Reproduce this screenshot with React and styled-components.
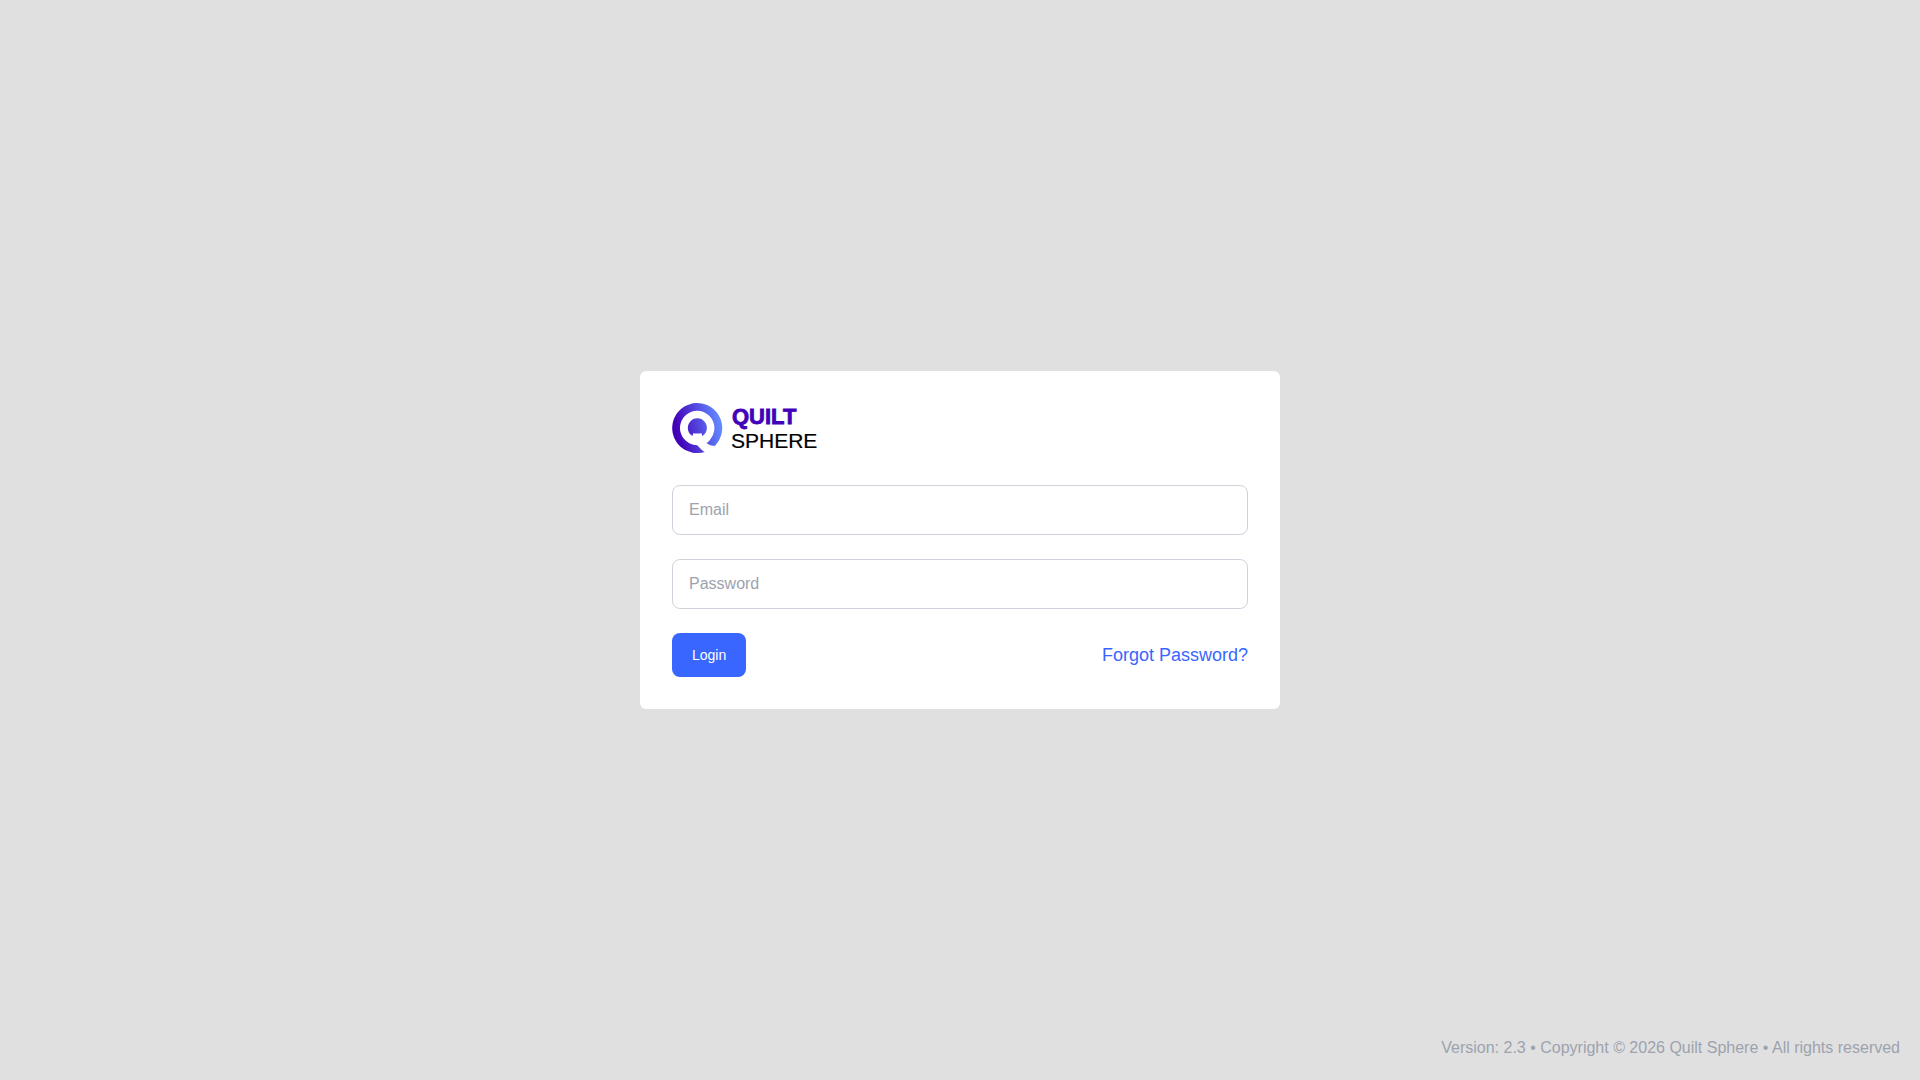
import styled, { createGlobalStyle } from "styled-components";

const GlobalStyle = createGlobalStyle`
  *,
  *::before,
  *::after {
    box-sizing: border-box;
  }

  body {
    margin: 0;
    background: #e0e0e0;
    font-family: "Liberation Sans", Arial, sans-serif;
    font-size: 16px;
    line-height: 24px;
  }
`;

const Page = styled.div`
  position: relative;
  min-height: 100vh;
  display: flex;
  align-items: center;
  justify-content: center;
`;

const Card = styled.main`
  width: 100%;
  max-width: 640px;
  padding: 32px;
  border-radius: 6px;
  background: #fff;
`;

const LogoImage = styled.svg`
  display: block;
  width: 146px;
  height: 50px;
  margin-bottom: 32px;
`;

const Form = styled.form`
  display: flex;
  flex-direction: column;
  gap: 24px;
`;

const Input = styled.input`
  width: 100%;
  height: 50px;
  padding: 0 16px;
  border: 1px solid #d1d1db;
  border-radius: 8px;
  background: #fff;
  color: #111827;
  font: inherit;

  &::placeholder {
    color: #9ca3af;
    opacity: 1;
  }

  &:focus {
    outline: none;
    border-color: #3866ff;
  }
`;

const Actions = styled.div`
  display: flex;
  align-items: center;
  justify-content: space-between;
`;

const Button = styled.button`
  height: 44px;
  padding: 0 20px;
  border: 0;
  border-radius: 8px;
  background: #3866ff;
  color: #fff;
  font-family: inherit;
  font-size: 14px;
  line-height: 20px;
  cursor: pointer;
`;

const ForgotLink = styled.a`
  color: #3866ff;
  font-size: 18px;
  line-height: 28px;
  text-decoration: none;

  &:hover {
    text-decoration: underline;
  }
`;

const Footer = styled.footer`
  position: absolute;
  right: 20px;
  bottom: 20px;
  color: #9ca3af;
`;

function Logo() {
  return (
    <LogoImage viewBox="0 0 146 50" role="img" aria-label="Quilt Sphere">
      <defs>
        <linearGradient
          id="emblem"
          gradientUnits="userSpaceOnUse"
          x1="5"
          y1="30"
          x2="48"
          y2="20"
        >
          <stop offset="0" stopColor="#4200b8" />
          <stop offset="1" stopColor="#6388ff" />
        </linearGradient>
      </defs>
      <g fill="url(#emblem)">
        <path d="M42.6 43 A25 25 0 1 0 32.7 48.9 Q29.5 47.4 27.4 44.6 L25.2 42.2 A17.2 17.2 0 1 1 39.2 35 Q37.6 38 34.6 40.2 Q38 42.8 42.6 43 Z" />
        <path d="M20.5 33 A9.5 9.5 0 1 1 30.2 33 L29.6 30.2 Q25.3 30.8 21.2 30.2 Z" />
      </g>
      <text
        x="60"
        y="21"
        fill="#4200b8"
        stroke="#4200b8"
        strokeWidth="0.8"
        fontFamily="Liberation Sans, Arial, sans-serif"
        fontSize="22"
        fontWeight="700"
      >
        QUILT
      </text>
      <text
        x="59"
        y="45"
        fill="#000"
        stroke="#000"
        strokeWidth="0.2"
        fontFamily="Liberation Sans, Arial, sans-serif"
        fontSize="21"
      >
        SPHERE
      </text>
    </LogoImage>
  );
}

export default function App() {
  return (
    <>
      <GlobalStyle />
      <Page>
        <Card>
          <Logo />
          <Form onSubmit={(e) => e.preventDefault()}>
            <Input type="email" placeholder="Email" aria-label="Email" />
            <Input
              type="password"
              placeholder="Password"
              aria-label="Password"
            />
            <Actions>
              <Button type="submit">Login</Button>
              <ForgotLink href="#forgot">Forgot Password?</ForgotLink>
            </Actions>
          </Form>
        </Card>
        <Footer>
          Version: 2.3 • Copyright © 2026 Quilt Sphere • All rights reserved
        </Footer>
      </Page>
    </>
  );
}
